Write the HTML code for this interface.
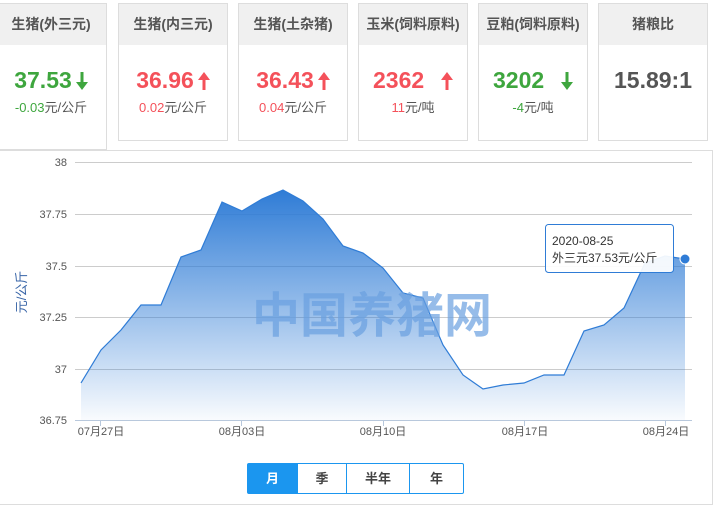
<!DOCTYPE html>
<html><head><meta charset="utf-8"><style>
body{margin:0;width:713px;height:507px;background:#fff;font-family:"Liberation Sans","Noto Sans CJK SC",sans-serif;position:relative;overflow:hidden}
.card{position:absolute;top:3px;width:108px;height:136px;border:1px solid #ddd;background:#fff}
.card .h{height:41px;background:#f0f0f0;text-align:center;line-height:41px;font-size:14px;font-weight:bold;color:#555}
.card .v{text-align:center;font-size:23px;font-weight:bold;margin-top:20px;height:30px;line-height:30px}
.card .v svg{vertical-align:-2px;margin-left:4px}
.card .s{text-align:center;font-size:13px;color:#555;margin-top:2px}
.g{color:#3ea63e}.r{color:#f4515a}
.chart{position:absolute;left:-4px;top:150px;width:715px;height:353px;border:1px solid #ddd}
.btns{position:absolute;left:247px;top:463px;height:29px;border:1px solid #1b96ef;border-radius:2px;display:flex;font-size:13px;font-weight:bold;color:#444}
.btns div{line-height:29px;text-align:center;border-left:1px solid #1b96ef}
</style></head><body>
<div class="chart"></div>
<div class="card" style="left:-4px;height:146px;border-left:none;border-top:none;top:3px;width:110px"><div class="h" style="height:41px;border-top:1px solid #ddd">生猪(外三元)</div><div class="v g">37.53<svg width="12" height="18" viewBox="0 0 12 18"><path d="M4.5 0h3v10h4.5L6 18 0 10h4.5z" fill="#3ea63e"/></svg></div><div class="s"><span class="g">-0.03</span>元/公斤</div></div>
<div class="card" style="left:118px"><div class="h">生猪(内三元)</div><div class="v r">36.96<svg width="12" height="18" viewBox="0 0 12 18"><path d="M4.5 18h3V8h4.5L6 0 0 8h4.5z" fill="#f4515a"/></svg></div><div class="s"><span class="r">0.02</span>元/公斤</div></div>
<div class="card" style="left:238px"><div class="h">生猪(土杂猪)</div><div class="v r">36.43<svg width="12" height="18" viewBox="0 0 12 18"><path d="M4.5 18h3V8h4.5L6 0 0 8h4.5z" fill="#f4515a"/></svg></div><div class="s"><span class="r">0.04</span>元/公斤</div></div>
<div class="card" style="left:358px"><div class="h">玉米(饲料原料)</div><div class="v r">2362 &nbsp;<svg width="12" height="18" viewBox="0 0 12 18"><path d="M4.5 18h3V8h4.5L6 0 0 8h4.5z" fill="#f4515a"/></svg></div><div class="s"><span class="r">11</span>元/吨</div></div>
<div class="card" style="left:478px"><div class="h">豆粕(饲料原料)</div><div class="v g">3202 &nbsp;<svg width="12" height="18" viewBox="0 0 12 18"><path d="M4.5 0h3v10h4.5L6 18 0 10h4.5z" fill="#3ea63e"/></svg></div><div class="s"><span class="g">-4</span>元/吨</div></div>
<div class="card" style="left:598px"><div class="h">猪粮比</div><div class="v" style="color:#555">15.89:1</div></div>
<svg style="position:absolute;left:0;top:0" width="713" height="507">
<defs><linearGradient id="gr" x1="0" y1="0" x2="0" y2="1"><stop offset="0" stop-color="#2f7cd6"/><stop offset="1" stop-color="#2f7cd6" stop-opacity="0.03"/></linearGradient></defs>
<g stroke="#ccc" stroke-width="1"><line x1="75" y1="162.5" x2="692" y2="162.5"/><line x1="75" y1="214.5" x2="692" y2="214.5"/><line x1="75" y1="266.5" x2="692" y2="266.5"/><line x1="75" y1="317.5" x2="692" y2="317.5"/><line x1="75" y1="369.5" x2="692" y2="369.5"/></g>
<polygon fill="url(#gr)" points="81,420 81,383 101,350 121,330 141,305 161,305 181,257 201,250 222,202 242,211 262,199 283,190 303,201 323,219 343,246 363,253 383,268 403,293 423,298 443,345 463,375 483,389 503,385 524,383 544,375 564,375 584,331 604,325 624,308 645,263 665,256 685,259 685,420"/>
<polyline fill="none" stroke="#2f7cd6" stroke-width="1.2" points="81,383 101,350 121,330 141,305 161,305 181,257 201,250 222,202 242,211 262,199 283,190 303,201 323,219 343,246 363,253 383,268 403,293 423,298 443,345 463,375 483,389 503,385 524,383 544,375 564,375 584,331 604,325 624,308 645,263 665,256 685,259"/>
<line x1="75" y1="420.5" x2="692" y2="420.5" stroke="#b8c8dc"/>
<g stroke="#b8c8dc"><line x1="100.5" y1="420" x2="100.5" y2="426"/><line x1="241.5" y1="420" x2="241.5" y2="426"/><line x1="383.5" y1="420" x2="383.5" y2="426"/><line x1="524.5" y1="420" x2="524.5" y2="426"/><line x1="665.5" y1="420" x2="665.5" y2="426"/></g>
<g font-size="11" fill="#555" text-anchor="end" font-family="Liberation Sans,sans-serif"><text x="67" y="166">38</text><text x="67" y="218">37.75</text><text x="67" y="270">37.5</text><text x="67" y="321">37.25</text><text x="67" y="373">37</text><text x="67" y="424">36.75</text></g>
<g font-size="11" fill="#555" text-anchor="middle"><text x="101" y="435">07月27日</text><text x="242" y="435">08月03日</text><text x="383" y="435">08月10日</text><text x="525" y="435">08月17日</text><text x="666" y="435">08月24日</text></g>
<text x="0" y="0" font-size="13" fill="#3a66a8" transform="translate(26,292) rotate(-90)" text-anchor="middle">元/公斤</text>
<text x="372" y="332" font-size="48" font-weight="bold" fill="#6a9fe0" fill-opacity="0.7" text-anchor="middle">中国养猪网</text>
<circle cx="685" cy="259" r="5" fill="#2f7cd6" stroke="#fff" stroke-width="1"/>
<rect x="545.5" y="224.5" width="128" height="48" rx="3" fill="#fff" fill-opacity="0.92" stroke="#2f7cd6"/>
<text x="552" y="245" font-size="12" fill="#333">2020-08-25</text>
<text x="552" y="262" font-size="12" fill="#333">外三元37.53元/公斤</text>
</svg>
<div class="btns"><div style="width:49px;background:#1b96ef;color:#fff;border-left:none">月</div><div style="width:48px">季</div><div style="width:62px">半年</div><div style="width:53px">年</div></div>
</body></html>
